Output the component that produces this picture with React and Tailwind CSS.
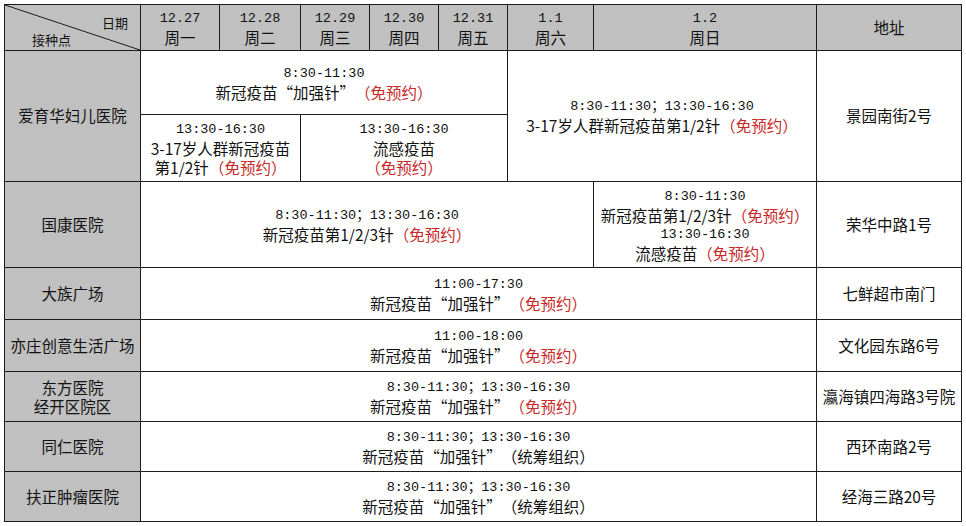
import React from "react";

const cjk = "font-['Noto_Sans_CJK_SC','Noto_Sans',sans-serif]";

const R = ({ children }) => <span className="text-[#c82828]">{children}</span>;
const T = ({ children }) => (
  <div className="font-['Liberation_Mono','Noto_Sans_CJK_SC',monospace] text-[13.5px] leading-[19px] whitespace-nowrap">
    {children}
  </div>
);
const L = ({ children }) => <div className="leading-[19px] whitespace-nowrap">{children}</div>;

const td = "border border-[#1c1c1c] text-center align-middle p-0";
const th = td + " bg-[#c0c0c0]";

const Booster = ({ red = true }) => (
  <L>
    新冠疫苗“加强针”{red ? <R>（免预约）</R> : "（统筹组织）"}
  </L>
);

function DateHead({ d, w }) {
  return (
    <td className={th}>
      <div className="font-['Liberation_Mono',monospace] text-[13.5px] leading-[19px]">{d}</div>
      <div className="leading-[19px]">{w}</div>
    </td>
  );
}

export default function App() {
  return (
    <div className={`${cjk} [text-spacing-trim:space-all] bg-white w-[966px] h-[526px] pt-[4px] pl-[4px] text-[15.5px] text-[#111]`}>
      <table className="border-collapse table-fixed w-[957px]">
        <colgroup>
          <col className="w-[136px]" />
          <col className="w-[79px]" />
          <col className="w-[81px]" />
          <col className="w-[69px]" />
          <col className="w-[69px]" />
          <col className="w-[69px]" />
          <col className="w-[86px]" />
          <col className="w-[223px]" />
          <col className="w-[145px]" />
        </colgroup>
        <tbody>
          <tr className="h-[45px]">
            <td className={th + " relative"}>
              <svg className="absolute inset-0 w-full h-full" preserveAspectRatio="none" viewBox="0 0 100 100">
                <line x1="0" y1="0" x2="100" y2="100" stroke="#1c1c1c" strokeWidth="1" vectorEffect="non-scaling-stroke" />
              </svg>
              <div className="flex flex-col h-[45px] text-[13px] leading-[16px]">
                <div className="text-right pr-[12px] pt-[10px]">日期</div>
                <div className="text-left pl-[27px] pt-[1px]">接种点</div>
              </div>
            </td>
            <DateHead d="12.27" w="周一" />
            <DateHead d="12.28" w="周二" />
            <DateHead d="12.29" w="周三" />
            <DateHead d="12.30" w="周四" />
            <DateHead d="12.31" w="周五" />
            <DateHead d="1.1" w="周六" />
            <DateHead d="1.2" w="周日" />
            <td className={th}>地址</td>
          </tr>
          <tr className="h-[64px]">
            <td className={th} rowSpan={2}>爱育华妇儿医院</td>
            <td className={td} colSpan={5}>
              <T>8:30-11:30</T>
              <Booster />
            </td>
            <td className={td} colSpan={2} rowSpan={2}>
              <T>8:30-11:30；13:30-16:30</T>
              <L>
                3-17岁人群新冠疫苗第1/2针<R>（免预约）</R>
              </L>
            </td>
            <td className={td} rowSpan={2}>景园南街2号</td>
          </tr>
          <tr className="h-[67px]">
            <td className={td} colSpan={2}>
              <T>13:30-16:30</T>
              <L>3-17岁人群新冠疫苗</L>
              <L>
                第1/2针<R>（免预约）</R>
              </L>
            </td>
            <td className={td} colSpan={3}>
              <T>13:30-16:30</T>
              <L>流感疫苗</L>
              <L>
                <R>（免预约）</R>
              </L>
            </td>
          </tr>
          <tr className="h-[86px]">
            <td className={th}>国康医院</td>
            <td className={td} colSpan={6}>
              <T>8:30-11:30；13:30-16:30</T>
              <L>
                新冠疫苗第1/2/3针<R>（免预约）</R>
              </L>
            </td>
            <td className={td}>
              <T>8:30-11:30</T>
              <L>
                新冠疫苗第1/2/3针<R>（免预约）</R>
              </L>
              <T>13:30-16:30</T>
              <L>
                流感疫苗<R>（免预约）</R>
              </L>
            </td>
            <td className={td}>荣华中路1号</td>
          </tr>
          <tr className="h-[52px]">
            <td className={th}>大族广场</td>
            <td className={td} colSpan={7}>
              <T>11:00-17:30</T>
              <Booster />
            </td>
            <td className={td}>七鲜超市南门</td>
          </tr>
          <tr className="h-[52px]">
            <td className={th}>亦庄创意生活广场</td>
            <td className={td} colSpan={7}>
              <T>11:00-18:00</T>
              <Booster />
            </td>
            <td className={td}>文化园东路6号</td>
          </tr>
          <tr className="h-[50px]">
            <td className={th}>
              <L>东方医院</L>
              <L>经开区院区</L>
            </td>
            <td className={td} colSpan={7}>
              <T>8:30-11:30；13:30-16:30</T>
              <Booster />
            </td>
            <td className={td}>瀛海镇四海路3号院</td>
          </tr>
          <tr className="h-[50px]">
            <td className={th}>同仁医院</td>
            <td className={td} colSpan={7}>
              <T>8:30-11:30；13:30-16:30</T>
              <Booster red={false} />
            </td>
            <td className={td}>西环南路2号</td>
          </tr>
          <tr className="h-[50px]">
            <td className={th}>扶正肿瘤医院</td>
            <td className={td} colSpan={7}>
              <T>8:30-11:30；13:30-16:30</T>
              <Booster red={false} />
            </td>
            <td className={td}>经海三路20号</td>
          </tr>
        </tbody>
      </table>
    </div>
  );
}
